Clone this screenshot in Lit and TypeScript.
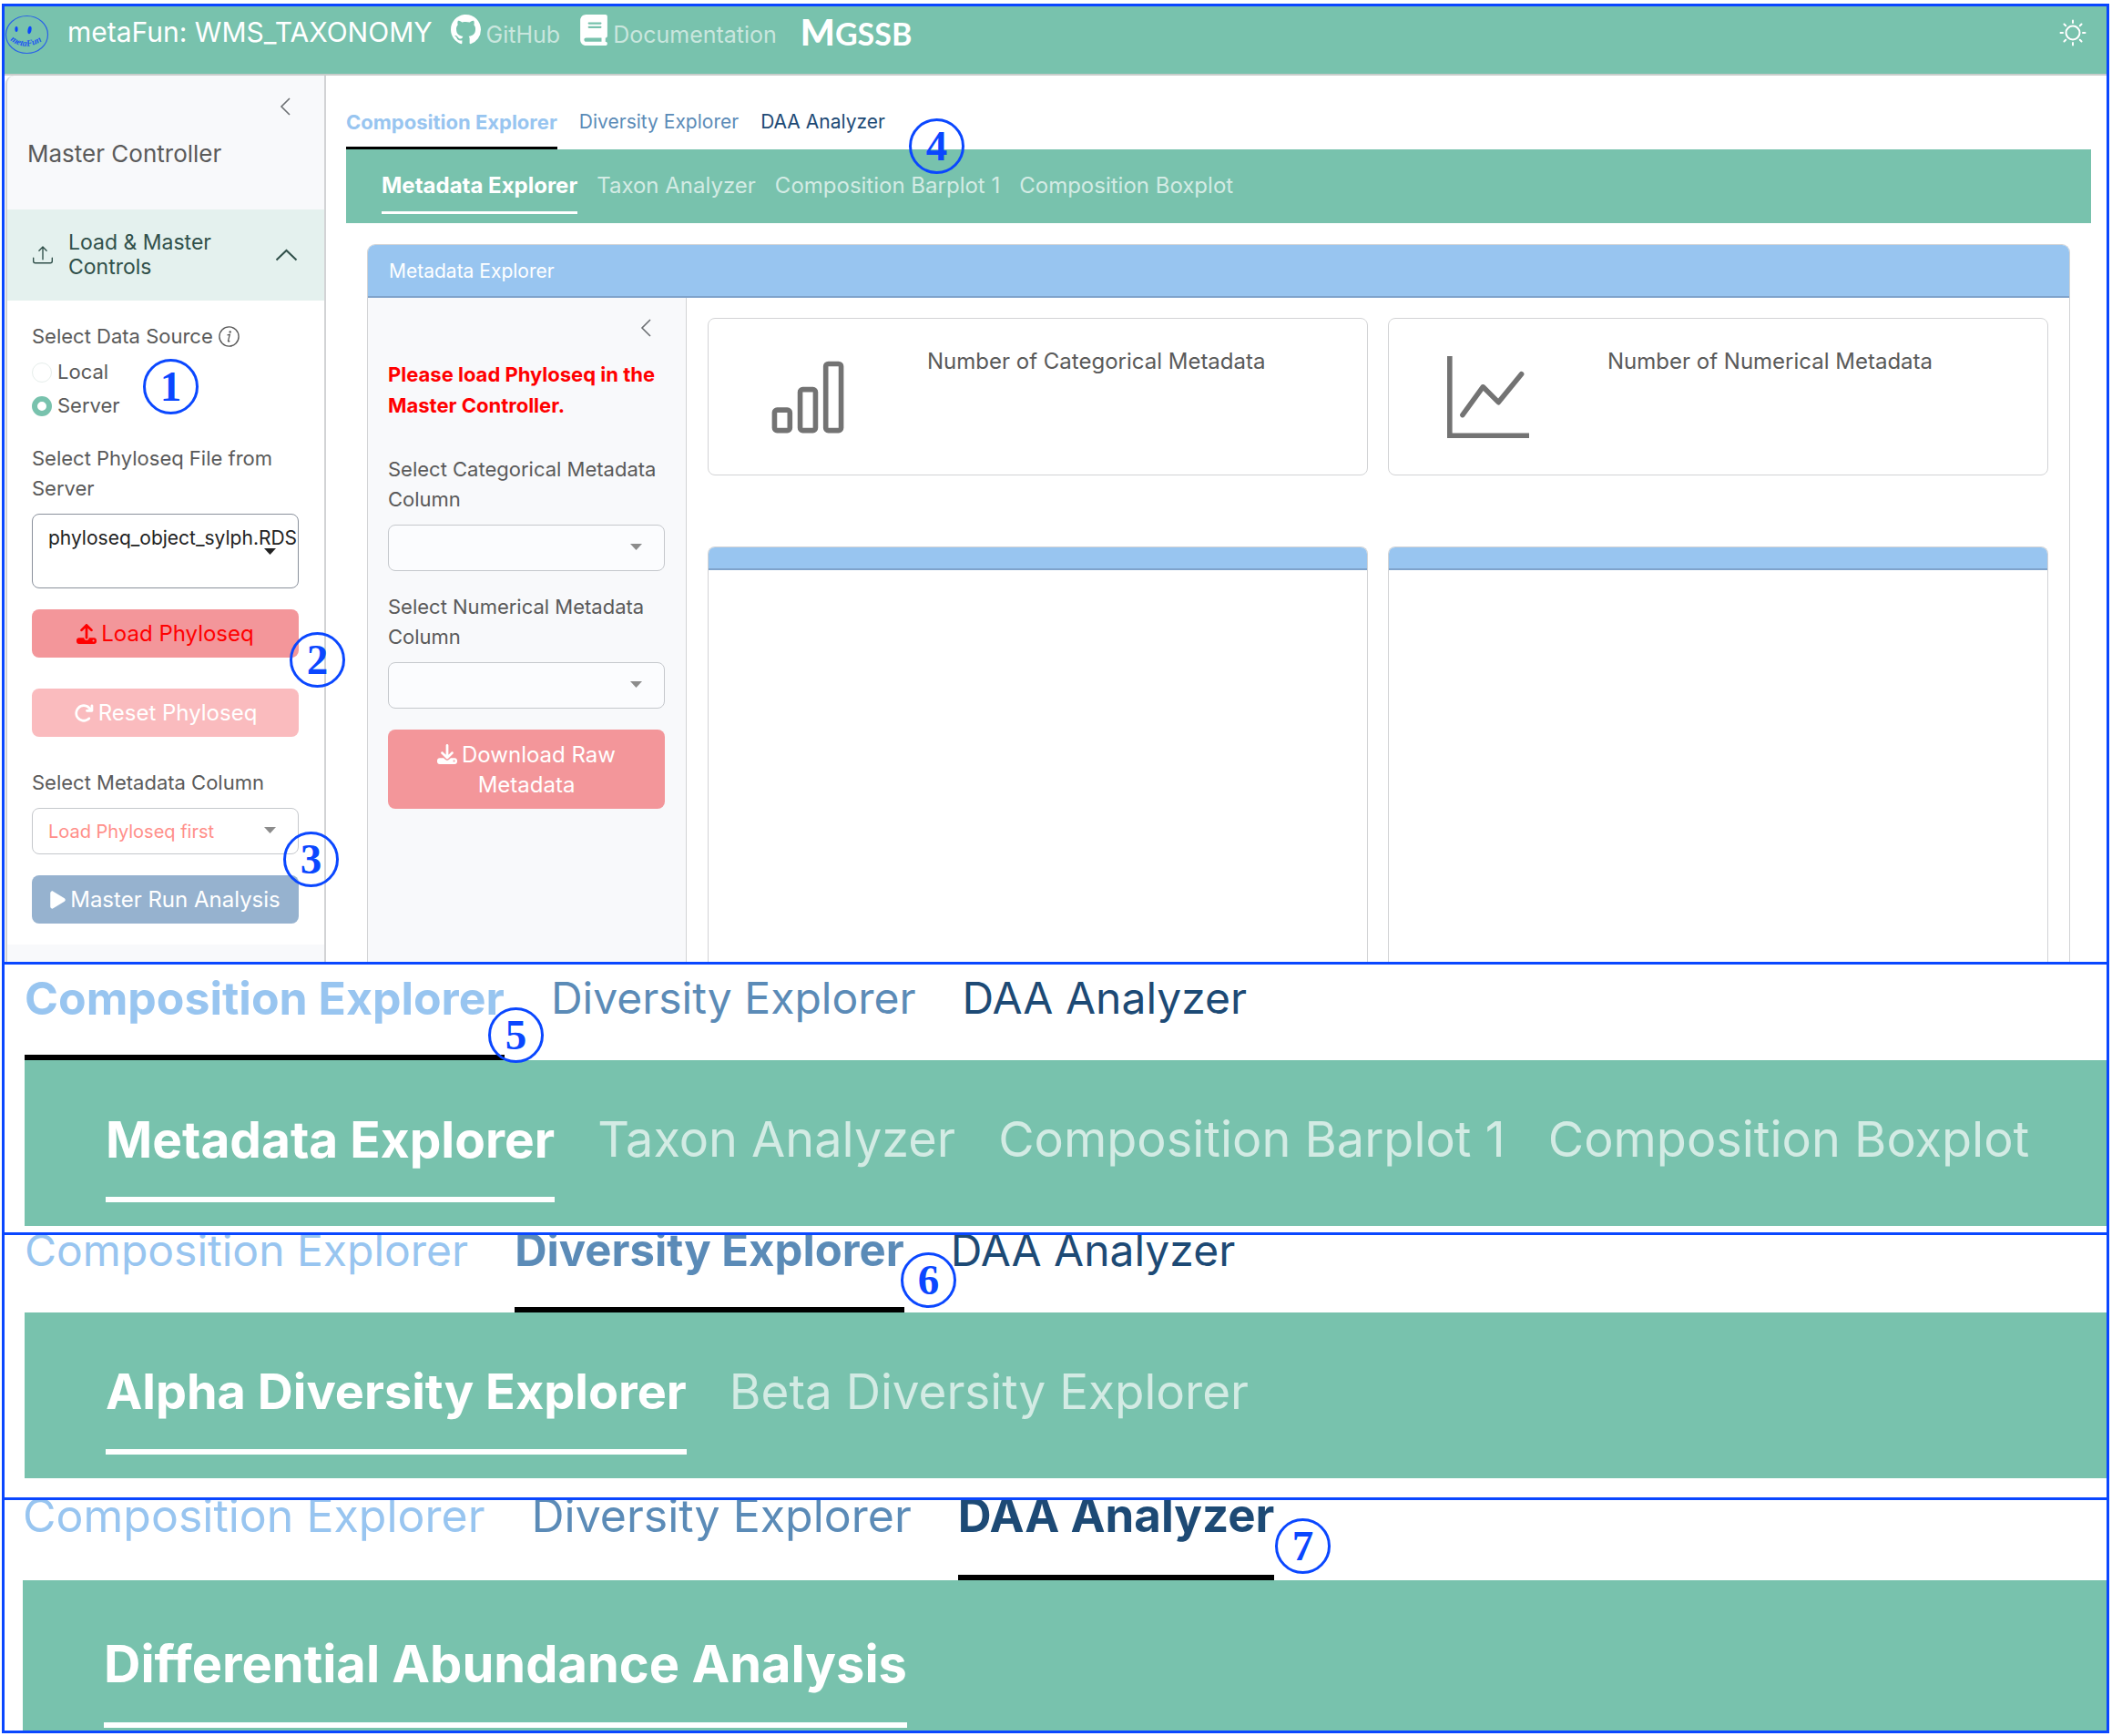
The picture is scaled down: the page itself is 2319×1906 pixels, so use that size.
import { LitElement, html, css, svg, nothing } from "lit";
import { customElement, property } from "lit/decorators.js";
import { classMap } from "lit/directives/class-map.js";

const icons = {
  github: {
    box: "0 0 16 16",
    d: "M8 0C3.58 0 0 3.58 0 8c0 3.54 2.29 6.53 5.47 7.59.4.07.55-.17.55-.38 0-.19-.01-.82-.01-1.49-2.01.37-2.53-.49-2.69-.94-.09-.23-.48-.94-.82-1.13-.28-.15-.68-.52-.01-.53.63-.01 1.08.58 1.23.82.72 1.21 1.87.87 2.33.66.07-.52.28-.87.51-1.07-1.78-.2-3.64-.89-3.64-3.95 0-.87.31-1.59.82-2.15-.08-.2-.36-1.02.08-2.12 0 0 .67-.21 2.2.82.64-.18 1.32-.27 2-.27s1.36.09 2 .27c1.53-1.04 2.2-.82 2.2-.82.44 1.1.16 1.92.08 2.12.51.56.82 1.27.82 2.15 0 3.07-1.87 3.75-3.65 3.95.29.25.54.73.54 1.48 0 1.07-.01 1.93-.01 2.2 0 .21.15.46.55.38A8.01 8.01 0 0 0 16 8c0-4.42-3.58-8-8-8",
  },
  book: {
    box: "0 0 448 512",
    d: "M96 0C43 0 0 43 0 96V416c0 53 43 96 96 96H384h32c17.7 0 32-14.3 32-32s-14.3-32-32-32V384c17.7 0 32-14.3 32-32V32c0-17.7-14.3-32-32-32H384 96zm0 384H352v64H96c-17.7 0-32-14.3-32-32s14.3-32 32-32zm32-240c0-8.8 7.2-16 16-16H336c8.8 0 16 7.2 16 16s-7.2 16-16 16H144c-8.8 0-16-7.2-16-16zm16 48H336c8.8 0 16 7.2 16 16s-7.2 16-16 16H144c-8.8 0-16-7.2-16-16s7.2-16 16-16z",
  },
  tray: {
    box: "0 0 16 16",
    d: "M.5 9.9a.5.5 0 0 1 .5.5v2.5a1 1 0 0 0 1 1h12a1 1 0 0 0 1-1v-2.5a.5.5 0 0 1 1 0v2.5a2 2 0 0 1-2 2H2a2 2 0 0 1-2-2v-2.5a.5.5 0 0 1 .5-.5M7.646 1.146a.5.5 0 0 1 .708 0l3 3a.5.5 0 0 1-.708.708L8.5 2.707V11.5a.5.5 0 0 1-1 0V2.707L5.354 4.854a.5.5 0 1 1-.708-.708z",
  },
  upload: {
    box: "0 0 512 512",
    d: "M288 109.3V352c0 17.7-14.3 32-32 32s-32-14.3-32-32V109.3l-73.4 73.4c-12.5 12.5-32.8 12.5-45.3 0s-12.5-32.8 0-45.3l128-128c12.5-12.5 32.8-12.5 45.3 0l128 128c12.5 12.5 12.5 32.8 0 45.3s-32.8 12.5-45.3 0L288 109.3zM64 352H192c0 35.3 28.7 64 64 64s64-28.7 64-64H448c35.3 0 64 28.7 64 64v32c0 35.3-28.7 64-64 64H64c-35.3 0-64-28.7-64-64V416c0-35.3 28.7-64 64-64zM432 456a24 24 0 1 0 0-48 24 24 0 1 0 0 48z",
  },
  download: {
    box: "0 0 512 512",
    d: "M288 32c0-17.7-14.3-32-32-32s-32 14.3-32 32V274.7l-73.4-73.4c-12.5-12.5-32.8-12.5-45.3 0s-12.5 32.8 0 45.3l128 128c12.5 12.5 32.8 12.5 45.3 0l128-128c12.5-12.5 12.5-32.8 0-45.3s-32.8-12.5-45.3 0L288 274.7V32zM64 352c-35.3 0-64 28.7-64 64v32c0 35.3 28.7 64 64 64H448c35.3 0 64-28.7 64-64V416c0-35.3-28.7-64-64-64H346.5l-45.3 45.3c-25 25-65.5 25-90.5 0L165.5 352H64zm368 56a24 24 0 1 1 0 48 24 24 0 1 1 0-48z",
  },
  reload: {
    box: "0 0 512 512",
    d: "M386.3 160H336c-17.7 0-32 14.3-32 32s14.3 32 32 32H464c17.7 0 32-14.3 32-32V64c0-17.7-14.3-32-32-32s-32 14.3-32 32v51.2L414.4 97.6c-87.5-87.5-229.3-87.5-316.8 0s-87.5 229.3 0 316.8s229.3 87.5 316.8 0c12.5-12.5 12.5-32.8 0-45.3s-32.8-12.5-45.3 0c-62.5 62.5-163.8 62.5-226.3 0s-62.5-163.8 0-226.3s163.8-62.5 226.3 0L386.3 160z",
  },
  play: {
    box: "0 0 384 512",
    d: "M73 39c-14.8-9.1-33.4-9.4-48.5-.9S0 62.6 0 80V432c0 17.4 9.4 33.4 24.5 41.9s33.7 8.1 48.5-.9L361 297c14.3-8.7 23-24.2 23-41s-8.7-32.2-23-41L73 39z",
  },
  bars: {
    box: "0 0 16 16",
    d: "M4 11H2v3h2zm5-4H7v7h2zm5-5v12h-2V2zm-2-1a1 1 0 0 0-1 1v12a1 1 0 0 0 1 1h2a1 1 0 0 0 1-1V2a1 1 0 0 0-1-1zM6 7a1 1 0 0 1 1-1h2a1 1 0 0 1 1 1v7a1 1 0 0 1-1 1H7a1 1 0 0 1-1-1zm-5 4a1 1 0 0 1 1-1h2a1 1 0 0 1 1 1v3a1 1 0 0 1-1 1H2a1 1 0 0 1-1-1z",
  },
  graph: {
    box: "0 0 16 16",
    d: "M0 0h1v15h15v1H0zm14.817 3.113a.5.5 0 0 1 .07.704l-4.5 5.5a.5.5 0 0 1-.74.037L7.06 6.767l-3.656 5.027a.5.5 0 0 1-.808-.588l4-5.5a.5.5 0 0 1 .758-.06l2.609 2.61 4.15-5.073a.5.5 0 0 1 .704-.07",
  },
};

const icon = (name: keyof typeof icons, cls: string) =>
  html`<svg class="icon ${cls}" viewBox=${icons[name].box} aria-hidden="true"><path fill="currentColor" d=${icons[name].d}></path></svg>`;

const MAIN_TABS = ["Composition Explorer", "Diversity Explorer", "DAA Analyzer"];
const COMPOSITION_TABS = ["Metadata Explorer", "Taxon Analyzer", "Composition Barplot 1", "Composition Boxplot"];

/** Two-level navigation: plain tabs above a green bar of sub-tabs. */
@customElement("tab-levels")
export class TabLevels extends LitElement {
  @property({ type: Array }) tabs: string[] = MAIN_TABS;
  @property({ type: Array }) subtabs: string[] = [];
  @property({ type: Number }) active = 0;

  static styles = css`
    :host {
      display: block;
      font-family: Inter, "Liberation Sans", sans-serif;
      --size: 21px;
      --size-on: 22px;
      --sub-size: 24px;
      --sub-size-on: 24px;
      --gap: 24px;
      --sub-gap: 21px;
      --rule: 3px;
      --top: 34px;
      --drop: 10px;
      --inset: 39px;
      --sub-top: 23px;
      --sub-drop: 11px;
      --sub-end: 10px;
    }
    :host([view="composition"]),
    :host([view="diversity"]),
    :host([view="daa"]) {
      --size: 48px;
      --size-on: 50px;
      --sub-size: 54px;
      --sub-size-on: 55px;
      --gap: 51px;
      --sub-gap: 47px;
      --rule: 6px;
      --top: 20px;
      --drop: 45px;
      --inset: 89px;
      --sub-top: 70px;
      --sub-drop: 46px;
      --sub-end: 26px;
    }
    :host([view="diversity"]) {
      --top: 0px;
      --size-on: 49px;
      --sub-size: 53px;
      --sub-size-on: 54px;
    }
    :host([view="daa"]) {
      --top: 0px;
      --size: 50px;
      --size-on: 51px;
      --sub-size-on: 56px;
      --drop: 48px;
      --sub-top: 75px;
      --sub-drop: 47px;
    }
    nav {
      display: flex;
    }
    .main {
      gap: var(--gap);
      font-size: var(--size);
      padding-top: var(--top);
    }
    .sub {
      gap: var(--sub-gap);
      font-size: var(--sub-size);
      background: #78c2ad;
      padding: var(--sub-top) var(--inset) var(--sub-end);
    }
    a {
      line-height: 34px;
      text-decoration: none;
      white-space: nowrap;
      border-bottom: var(--rule) solid transparent;
      padding-bottom: var(--drop);
    }
    .sub a {
      color: #d3ebe4;
      padding-bottom: var(--sub-drop);
    }
    .t0 { color: #98c5f0; }
    .t1 { color: #5b8bb7; }
    .t2 { color: #1d4a75; }
    .on {
      font-size: var(--size-on);
      font-weight: 700;
      border-bottom-color: #000;
    }
    .sub .on {
      font-size: var(--sub-size-on);
      color: #fff;
      border-bottom-color: #fff;
    }
  `;

  render() {
    return html`
      <nav class="main">
        ${this.tabs.map((t, i) => html`<a href="#" class=${classMap({ ["t" + i]: true, on: i === this.active })}>${t}</a>`)}
      </nav>
      <nav class="sub">
        ${this.subtabs.map((t, i) => html`<a href="#" class=${classMap({ on: i === 0 })}>${t}</a>`)}
      </nav>
    `;
  }
}

@customElement("app-root")
export class AppRoot extends LitElement {
  static styles = css`
    :host {
      display: block;
      background: #fff;
      color: #5a5a5a;
      font-family: Inter, "Liberation Sans", sans-serif;
      font-size: 22px;
      line-height: 33px;
      --blue: #0a47ff;
      --green: #78c2ad;
      --sky: #98c5f0;
      --edge: #d2d3d5;
      --soft: #f8f9fb;
    }
    * { box-sizing: border-box; }
    .frame {
      margin: 4px 3px 3px 2px;
      border: 3px solid var(--blue);
    }
    .shot {
      position: relative;
      overflow: hidden;
    }
    .shot + .shot { border-top: 3px solid var(--blue); }
    .zoomed { padding-left: 22px; }
    .third { padding-left: 20px; }
    .gap-s { padding-bottom: 7px; }
    .gap-m { padding-bottom: 21px; }
    .cut { height: 256px; }
    .icon { display: block; flex: none; }

    .badge {
      position: absolute;
      width: 61px;
      height: 61px;
      border: 3px solid var(--blue);
      border-radius: 50%;
      color: var(--blue);
      font: 700 47px/54px "Liberation Serif", serif;
      text-align: center;
    }
    .b1 { left: 152px; top: 387px; }
    .b2 { left: 313px; top: 687px; }
    .b3 { left: 306px; top: 906px; }
    .b4 { left: 993px; top: 123px; }
    .b5 { left: 531px; top: 47px; }
    .b6 { left: 984px; top: 19px; }
    .b7 { left: 1395px; top: 20px; }

    header {
      display: flex;
      align-items: flex-start;
      height: 76px;
      padding-right: 22px;
      background: var(--green);
      border-bottom: 2px solid #c9cdcb;
      color: #fff;
    }
    .logo { width: 49px; height: 44px; margin: 9px 0 0; display: block; flex: none; }
    .brand { margin: 10px 20px 0; font-size: 30px; line-height: 36px; font-weight: 400; white-space: nowrap; }
    .ext {
      display: flex;
      gap: 6px;
      margin: 9px 22px 0 0;
      color: #fff;
      text-decoration: none;
      font-size: 25px;
      line-height: 44px;
    }
    .ext span { color: #c9e6de; }
    .i-gh { width: 33px; height: 33px; }
    .i-book { width: 30px; height: 34px; }
    .lab {
      margin: 6px auto 0 4px;
      color: #fff;
      text-decoration: none;
      font: 700 34px/44px Lato, sans-serif;
    }
    .lab b { font-size: 40px; }
    .icon-btn {
      border: 0;
      background: none;
      padding: 0;
      color: inherit;
      cursor: pointer;
    }
    .sun { margin-top: 14px; }
    .sun svg { display: block; width: 30px; height: 30px; }

    .body { display: flex; align-items: stretch; }
    .side {
      width: 352px;
      flex: none;
      margin-left: 1px;
      border: 2px solid var(--edge);
      border-width: 0 2px 0 2px;
      border-top-left-radius: 9px;
      background: var(--soft);
    }
    .side-top {
      display: flex;
      justify-content: flex-end;
      padding: 24px 37px 0;
    }
    .chev { display: block; width: 12px; height: 20px; }
    h2 {
      margin: 29px 22px 49px;
      font-size: 26px;
      line-height: 25px;
      font-weight: 400;
    }
    .acc {
      display: flex;
      align-items: center;
      width: 100%;
      height: 100px;
      padding: 0 29px 0 28px;
      border: 0;
      background: #e4f1ee;
      color: #30504a;
      font: 400 23px/27px Inter, sans-serif;
      text-align: left;
    }
    .acc span { flex: 1; padding-left: 17px; }
    .i-tray { width: 22px; height: 22px; }
    .i-up { width: 25px; height: 14px; }
    .acc-body {
      display: flex;
      flex-direction: column;
      background: #fff;
      padding: 23px 28px 23px 27px;
    }
    fieldset { border: 0; margin: 0 0 23px; padding: 0; }
    legend { display: flex; align-items: center; gap: 6px; margin-bottom: 4px; padding: 0; line-height: 33px; white-space: nowrap; }
    .info { width: 23px; height: 23px; }
    .radio { display: flex; align-items: center; gap: 6px; height: 37px; }
    .radio input {
      appearance: none;
      width: 22px;
      height: 22px;
      margin: 0;
      border: 1px solid #e6eeeb;
      border-radius: 50%;
      background: #fff;
    }
    .radio input:checked { border: 6px solid var(--green); }
    .lbl { display: block; margin-bottom: 11px; }
    .pick { position: relative; display: block; }
    .pick select {
      display: block;
      appearance: none;
      width: 100%;
      height: 51px;
      padding: 0 17px;
      border: 1px solid #c5c8cc;
      border-radius: 8px;
      background: transparent;
      color: #ff8f8a;
      font: 400 20px/26px Inter, sans-serif;
      opacity: 1;
    }
    .pick svg { position: absolute; right: 25px; top: 21px; width: 13px; height: 7px; color: #8c8c8c; }
    .pick.tall select { height: 82px; padding: 0 0 29px 17px; border-color: #8a919c; color: #222; font-size: 21px; }
    .tall svg { top: 38px; color: #222; }
    .soft select { background: #fbfcfe; }
    .btn {
      display: flex;
      align-items: center;
      justify-content: center;
      gap: 5px;
      width: 100%;
      height: 53px;
      border: 0;
      border-radius: 8px;
      padding: 0;
      background: #f3969a;
      color: #fff;
      font: 400 24px/33px Inter, sans-serif;
      white-space: nowrap;
    }
    .i-btn { width: 22px; height: 22px; }
    .i-play { width: 17px; height: 22px; }
    .red { color: #f00; margin: 23px 0 34px; }
    .pale { background: #fabbbe; margin-bottom: 34px; }
    .run { background: #96b2cf; margin-top: 23px; }

    .main { flex: 1; min-width: 0; padding: 0 17px 0 22px; display: flex; flex-direction: column; }
    .card {
      flex: 1;
      display: flex;
      flex-direction: column;
      margin: 23px 23px 0;
      border: 1px solid var(--edge);
      border-bottom: 0;
      border-radius: 9px 9px 0 0;
      overflow: hidden;
    }
    .card-head {
      margin: 0;
      height: 58px;
      padding-left: 23px;
      background: var(--sky);
      border-bottom: 2px solid #7fa3cb;
      color: #fff;
      font-size: 21px;
      line-height: 58px;
      font-weight: 400;
    }
    .card-body { display: flex; flex: 1; }
    .inner {
      width: 350px;
      flex: none;
      padding: 23px 23px 0 22px;
      border-right: 1px solid var(--edge);
      background: var(--soft);
    }
    .inner .side-top { padding: 0 15px 0 0; }
    .warn { margin: 24px 0 37px; color: #f00; font-weight: 700; line-height: 34px; white-space: nowrap; }
    .inner .pick { margin-bottom: 23px; }
    .two { flex-direction: column; gap: 0; height: 87px; padding: 10px 0; }
    .two .line { display: flex; gap: 5px; align-items: center; }
    .grid {
      flex: 1;
      display: grid;
      grid-template-columns: 1fr 1fr;
      grid-template-rows: 173px 1fr;
      gap: 78px 22px;
      padding: 22px 23px 0;
    }
    .value {
      display: grid;
      grid-template-columns: 218px 1fr;
      border: 1px solid var(--edge);
      border-radius: 8px;
      color: #5a5a5a;
    }
    .value svg { width: 90px; height: 90px; margin: 41px 0 0 64px; color: #737373; }
    .value p { margin: 30px 0 0 22px; font-size: 24px; line-height: 34px; white-space: nowrap; }
    .plot {
      min-height: 456px;
      border: 1px solid var(--edge);
      border-bottom: 0;
      border-radius: 8px 8px 0 0;
      overflow: hidden;
    }
    .plot div { height: 25px; background: var(--sky); border-bottom: 2px solid #7fa3cb; }
  `;

  private badge(n: number) {
    return html`<span class="badge b${n}">${n}</span>`;
  }

  private chevron() {
    return html`<svg class="chev" viewBox="0 0 12 20" aria-hidden="true"><path d="M11 1 2 10l9 9" fill="none" stroke="#6c6f73" stroke-width="1.6"></path></svg>`;
  }

  private select(id: string, label: string, option: string, cls = "") {
    return html`
      <label class="lbl" for=${id}>${label}</label>
      <div class="pick ${cls}">
        <select id=${id}>${option ? html`<option>${option}</option>` : nothing}</select>
        <svg viewBox="0 0 13 7" aria-hidden="true"><path d="M0 0h13L6.500 7z" fill="currentColor"></path></svg>
      </div>
    `;
  }

  private header() {
    const rays = [0, 45, 90, 135, 180, 225, 270, 315];
    return html`
      <header>
        <svg class="logo" viewBox="0 0 49 44" role="img" aria-label="metaFun">
          <ellipse cx="24.500" cy="22" rx="23" ry="20.500" fill="none" stroke="#2a62e8" stroke-width="1.200"></ellipse>
          <ellipse cx="13" cy="16" rx="1.600" ry="3" fill="#0a47ff"></ellipse>
          <ellipse cx="27.500" cy="17" rx="2" ry="4.200" transform="rotate(10 27.500 17)" fill="#0a47ff"></ellipse>
          <path id="smile" d="M6 28Q22 41 41 29" fill="none"></path>
          <text font-family="Liberation Serif, serif" font-style="italic" font-weight="700" font-size="10" fill="#1d57f0"><textPath href="#smile">metaFun</textPath></text>
        </svg>
        <h1 class="brand">metaFun: WMS_TAXONOMY</h1>
        <a class="ext" href="#">${icon("github", "i-gh")}<span>GitHub</span></a>
        <a class="ext" href="#">${icon("book", "i-book")}<span>Documentation</span></a>
        <a class="lab" href="#"><b>M</b>GSSB</a>
        <button class="icon-btn sun" aria-label="Toggle theme">
          <svg viewBox="0 0 30 30" fill="none" stroke="#fff" stroke-width="2" stroke-linecap="round">
            <circle cx="15" cy="15" r="7.500"></circle>
            ${rays.map((a) => svg`<path d="M15 1.500v2.500" transform="rotate(${a} 15 15)"></path>`)}
          </svg>
        </button>
      </header>
    `;
  }

  private sidebar() {
    return html`
      <aside class="side">
        <div class="side-top"><button class="icon-btn" aria-label="Collapse sidebar">${this.chevron()}</button></div>
        <h2>Master Controller</h2>
        <button class="acc">
          ${icon("tray", "i-tray")}
          <span>Load &amp; Master<br />Controls</span>
          <svg class="i-up" viewBox="0 0 25 14" aria-hidden="true"><path d="M1.500 12.500l11-10.500 11 10.500" fill="none" stroke="#30504a" stroke-width="2"></path></svg>
        </button>
        <div class="acc-body">
          <fieldset>
            <legend>
              Select Data Source
              <svg class="info" viewBox="0 0 23 23" aria-hidden="true">
                <circle cx="11.500" cy="11.500" r="10.600" fill="none" stroke="#5a5a5a" stroke-width="1.400"></circle>
                <path d="M9.500 9.800l2.800-.4-1.800 7q0 1 1.800 0" fill="none" stroke="#5a5a5a" stroke-width="1.300"></path>
                <circle cx="12.700" cy="6.400" r="1.200" fill="#5a5a5a"></circle>
              </svg>
            </legend>
            <label class="radio"><input type="radio" name="source" value="local" />Local</label>
            <label class="radio"><input type="radio" name="source" value="server" checked />Server</label>
          </fieldset>
          ${this.select("file", "Select Phyloseq File from Server", "phyloseq_object_sylph.RDS", "tall")}
          <button class="btn red">${icon("upload", "i-btn")}Load Phyloseq</button>
          <button class="btn pale">${icon("reload", "i-btn")}Reset Phyloseq</button>
          ${this.select("column", "Select Metadata Column", "Load Phyloseq first")}
          <button class="btn run">${icon("play", "i-play")}Master Run Analysis</button>
        </div>
      </aside>
    `;
  }

  private explorer() {
    return html`
      <section class="card">
        <h3 class="card-head">Metadata Explorer</h3>
        <div class="card-body">
          <div class="inner">
            <div class="side-top"><button class="icon-btn" aria-label="Collapse panel">${this.chevron()}</button></div>
            <p class="warn">Please load Phyloseq in the<br />Master Controller.</p>
            ${this.select("cat", "Select Categorical Metadata Column", "", "soft")}
            ${this.select("num", "Select Numerical Metadata Column", "", "soft")}
            <button class="btn two"><span class="line">${icon("download", "i-btn")}Download Raw</span><span>Metadata</span></button>
          </div>
          <div class="grid">
            <div class="value">${icon("bars", "")}<p>Number of Categorical Metadata</p></div>
            <div class="value">${icon("graph", "")}<p>Number of Numerical Metadata</p></div>
            <div class="plot"><div></div></div>
            <div class="plot"><div></div></div>
          </div>
        </div>
      </section>
    `;
  }

  render() {
    return html`
      <div class="frame">
        <div class="shot">
          ${this.header()}
          <div class="body">
            ${this.sidebar()}
            <main class="main">
              <tab-levels .subtabs=${COMPOSITION_TABS}></tab-levels>
              ${this.explorer()}
            </main>
          </div>
          ${[1, 2, 3, 4].map((n) => this.badge(n))}
        </div>
        <div class="shot zoomed gap-s">
          <tab-levels view="composition" .subtabs=${COMPOSITION_TABS}></tab-levels>
          ${this.badge(5)}
        </div>
        <div class="shot zoomed gap-m">
          <tab-levels view="diversity" .active=${1} .subtabs=${["Alpha Diversity Explorer", "Beta Diversity Explorer"]}></tab-levels>
          ${this.badge(6)}
        </div>
        <div class="shot zoomed third cut">
          <tab-levels view="daa" .active=${2} .subtabs=${["Differential Abundance Analysis"]}></tab-levels>
          ${this.badge(7)}
        </div>
      </div>
    `;
  }
}
